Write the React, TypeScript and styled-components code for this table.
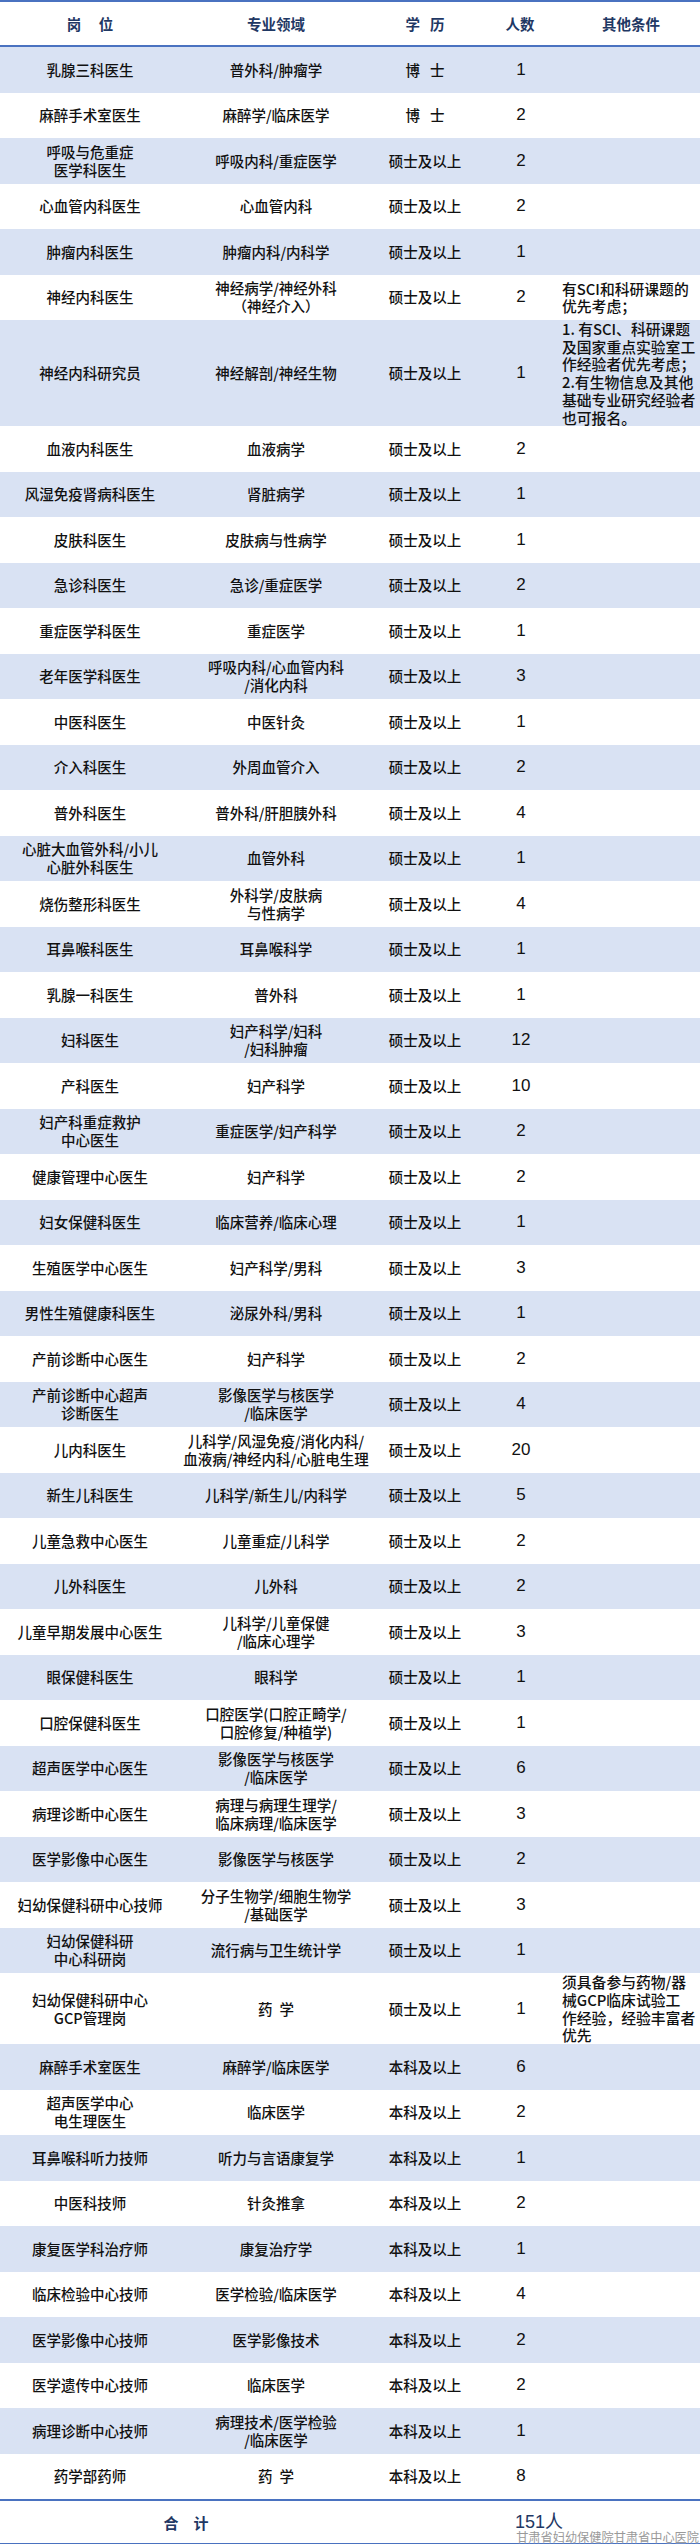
import React from "react";
import styled, { createGlobalStyle } from "styled-components";

type Job = [string, string, string, string, string?];

const DR = "博\u2002\u2009士";
const YX = "药\u2002学";

const jobs: Job[] = [
  ["乳腺三科医生", "普外科/肿瘤学", DR, "1"],
  ["麻醉手术室医生", "麻醉学/临床医学", DR, "2"],
  ["呼吸与危重症\n医学科医生", "呼吸内科/重症医学", "硕士及以上", "2"],
  ["心血管内科医生", "心血管内科", "硕士及以上", "2"],
  ["肿瘤内科医生", "肿瘤内科/内科学", "硕士及以上", "1"],
  ["神经内科医生", "神经病学/神经外科\n（神经介入）", "硕士及以上", "2", "有SCI和科研课题的\n优先考虑；"],
  [
    "神经内科研究员",
    "神经解剖/神经生物",
    "硕士及以上",
    "1",
    "1. 有SCI、科研课题\n及国家重点实验室工\n作经验者优先考虑；\n2.有生物信息及其他\n基础专业研究经验者\n也可报名。",
  ],
  ["血液内科医生", "血液病学", "硕士及以上", "2"],
  ["风湿免疫肾病科医生", "肾脏病学", "硕士及以上", "1"],
  ["皮肤科医生", "皮肤病与性病学", "硕士及以上", "1"],
  ["急诊科医生", "急诊/重症医学", "硕士及以上", "2"],
  ["重症医学科医生", "重症医学", "硕士及以上", "1"],
  ["老年医学科医生", "呼吸内科/心血管内科\n/消化内科", "硕士及以上", "3"],
  ["中医科医生", "中医针灸", "硕士及以上", "1"],
  ["介入科医生", "外周血管介入", "硕士及以上", "2"],
  ["普外科医生", "普外科/肝胆胰外科", "硕士及以上", "4"],
  ["心脏大血管外科/小儿\n心脏外科医生", "血管外科", "硕士及以上", "1"],
  ["烧伤整形科医生", "外科学/皮肤病\n与性病学", "硕士及以上", "4"],
  ["耳鼻喉科医生", "耳鼻喉科学", "硕士及以上", "1"],
  ["乳腺一科医生", "普外科", "硕士及以上", "1"],
  ["妇科医生", "妇产科学/妇科\n/妇科肿瘤", "硕士及以上", "12"],
  ["产科医生", "妇产科学", "硕士及以上", "10"],
  ["妇产科重症救护\n中心医生", "重症医学/妇产科学", "硕士及以上", "2"],
  ["健康管理中心医生", "妇产科学", "硕士及以上", "2"],
  ["妇女保健科医生", "临床营养/临床心理", "硕士及以上", "1"],
  ["生殖医学中心医生", "妇产科学/男科", "硕士及以上", "3"],
  ["男性生殖健康科医生", "泌尿外科/男科", "硕士及以上", "1"],
  ["产前诊断中心医生", "妇产科学", "硕士及以上", "2"],
  ["产前诊断中心超声\n诊断医生", "影像医学与核医学\n/临床医学", "硕士及以上", "4"],
  ["儿内科医生", "儿科学/风湿免疫/消化内科/\n血液病/神经内科/心脏电生理", "硕士及以上", "20"],
  ["新生儿科医生", "儿科学/新生儿/内科学", "硕士及以上", "5"],
  ["儿童急救中心医生", "儿童重症/儿科学", "硕士及以上", "2"],
  ["儿外科医生", "儿外科", "硕士及以上", "2"],
  ["儿童早期发展中心医生", "儿科学/儿童保健\n/临床心理学", "硕士及以上", "3"],
  ["眼保健科医生", "眼科学", "硕士及以上", "1"],
  ["口腔保健科医生", "口腔医学(口腔正畸学/\n口腔修复/种植学)", "硕士及以上", "1"],
  ["超声医学中心医生", "影像医学与核医学\n/临床医学", "硕士及以上", "6"],
  ["病理诊断中心医生", "病理与病理生理学/\n临床病理/临床医学", "硕士及以上", "3"],
  ["医学影像中心医生", "影像医学与核医学", "硕士及以上", "2"],
  ["妇幼保健科研中心技师", "分子生物学/细胞生物学\n/基础医学", "硕士及以上", "3"],
  ["妇幼保健科研\n中心科研岗", "流行病与卫生统计学", "硕士及以上", "1"],
  [
    "妇幼保健科研中心\nGCP管理岗",
    YX,
    "硕士及以上",
    "1",
    "须具备参与药物/器\n械GCP临床试验工\n作经验，经验丰富者\n优先",
  ],
  ["麻醉手术室医生", "麻醉学/临床医学", "本科及以上", "6"],
  ["超声医学中心\n电生理医生", "临床医学", "本科及以上", "2"],
  ["耳鼻喉科听力技师", "听力与言语康复学", "本科及以上", "1"],
  ["中医科技师", "针灸推拿", "本科及以上", "2"],
  ["康复医学科治疗师", "康复治疗学", "本科及以上", "1"],
  ["临床检验中心技师", "医学检验/临床医学", "本科及以上", "4"],
  ["医学影像中心技师", "医学影像技术", "本科及以上", "2"],
  ["医学遗传中心技师", "临床医学", "本科及以上", "2"],
  ["病理诊断中心技师", "病理技术/医学检验\n/临床医学", "本科及以上", "1"],
  ["药学部药师", YX, "本科及以上", "8"],
];

const GlobalStyle = createGlobalStyle`
  html, body {
    margin: 0;
    padding: 0;
    background: #ffffff;
  }
  body {
    width: 700px;
    font-family: "Noto Sans CJK SC", "Liberation Sans", sans-serif;
    color: #111111;
  }
`;

const COLS = "180px 192px 106px 84px 138px";

const Sheet = styled.div`
  position: relative;
  width: 700px;
  height: 2544px;
  box-sizing: border-box;
`;

const HeadRow = styled.div`
  display: grid;
  grid-template-columns: ${COLS};
  align-items: center;
  height: 47px;
  box-sizing: border-box;
  border-top: 2px solid #4a72c0;
  border-bottom: 2px solid #4a72c0;
  color: #1f3864;
  font-size: 14.5px;
  font-weight: 700;
  text-align: center;
  white-space: pre;
`;

const Row = styled.div<{ $striped: boolean }>`
  display: grid;
  grid-template-columns: ${COLS};
  align-items: center;
  min-height: 45.5px;
  background: ${(p) => (p.$striped ? "#d9e2f3" : "#ffffff")};
  font-size: 14.5px;
  font-weight: 500;
  line-height: 18px;
`;

const Cell = styled.div`
  text-align: center;
  white-space: pre-line;
`;

const Count = styled(Cell)`
  font-family: "Liberation Sans", sans-serif;
  font-weight: 400;
  font-size: 17px;
  padding-left: 2px;
`;

const Note = styled.div`
  white-space: pre-line;
  text-align: left;
  font-size: 14.8px;
  line-height: 17.7px;
`;

const TotalRow = styled.div`
  display: grid;
  grid-template-columns: 372px 106px 222px;
  align-items: center;
  height: 46px;
  box-sizing: border-box;
  border-top: 2px solid #4a72c0;
  border-bottom: 2px solid #4a72c0;
  color: #1f3864;
  font-size: 15px;
  font-weight: 700;
`;

const TotalLabel = styled.div`
  text-align: center;
`;

const TotalValue = styled.div`
  padding-left: 37px;
  padding-bottom: 4px;
  font-family: "Liberation Sans", "Noto Sans CJK SC", sans-serif;
  font-weight: 400;
  font-size: 18px;
`;

const Watermark = styled.div`
  position: absolute;
  right: 1px;
  bottom: 0;
  font-size: 12.2px;
  line-height: 14px;
  color: #9a9a9a;
  text-shadow: 0 0 1px #ffffff, 0 0 1px #ffffff;
  white-space: nowrap;
`;

export default function App() {
  return (
    <>
      <GlobalStyle />
      <Sheet>
        <HeadRow>
          <div>{"岗\u3000\u2009位"}</div>
          <div>专业领域</div>
          <div>{"学\u2002\u2009历"}</div>
          <div>人数</div>
          <div>其他条件</div>
        </HeadRow>
        {jobs.map(([post, major, degree, count, note], i) => (
          <Row key={i} $striped={i % 2 === 0}>
            <Cell>{post}</Cell>
            <Cell>{major}</Cell>
            <Cell>{degree}</Cell>
            <Count>{count}</Count>
            <Note>{note ?? ""}</Note>
          </Row>
        ))}
        <TotalRow>
          <TotalLabel>合　计</TotalLabel>
          <div />
          <TotalValue>151人</TotalValue>
        </TotalRow>
        <Watermark>甘肃省妇幼保健院甘肃省中心医院</Watermark>
      </Sheet>
    </>
  );
}
